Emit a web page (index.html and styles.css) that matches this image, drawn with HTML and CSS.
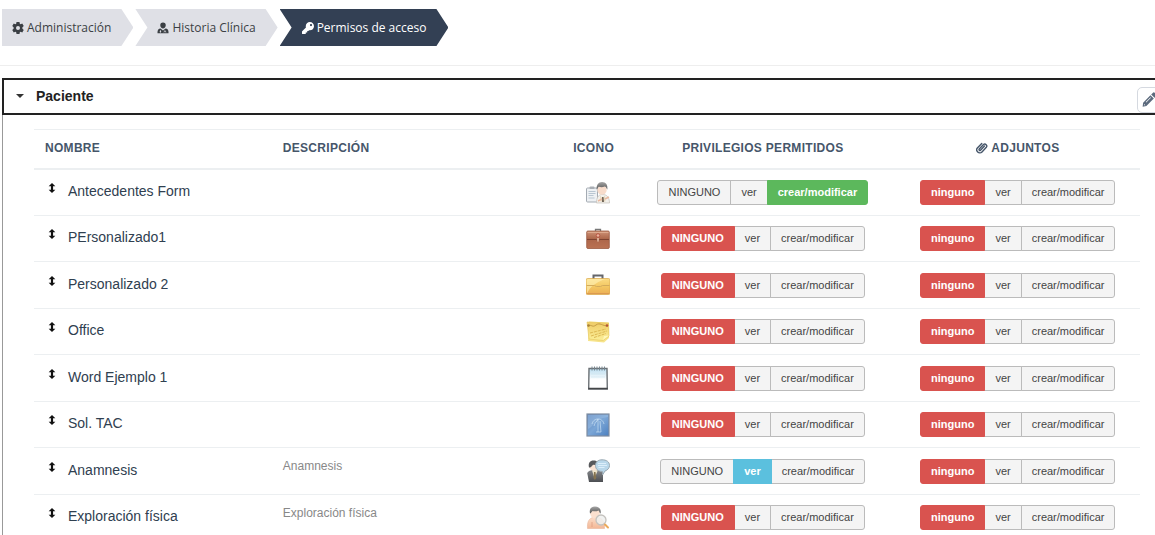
FILE: index.html
```html
<!DOCTYPE html>
<html lang="es">
<head>
<meta charset="utf-8">
<meta name="viewport" content="width=device-width, initial-scale=1">
<title>Permisos de acceso</title>
<link rel="stylesheet" href="styles.css">
</head>
<body>
<svg class="sprite" aria-hidden="true">
  <defs>
    <linearGradient id="g-brown" x1="0" y1="0" x2="0" y2="1"><stop offset="0" stop-color="#cf9377"/><stop offset=".45" stop-color="#ac664a"/><stop offset="1" stop-color="#ba7253"/></linearGradient>
    <linearGradient id="g-gold" x1="0" y1="0" x2="0" y2="1"><stop offset="0" stop-color="#fbdc83"/><stop offset=".5" stop-color="#f3c762"/><stop offset="1" stop-color="#ebae55"/></linearGradient>
    <linearGradient id="g-note" x1="0" y1="0" x2="0" y2="1"><stop offset="0" stop-color="#efcb66"/><stop offset="1" stop-color="#fbef98"/></linearGradient>
    <linearGradient id="g-blue" x1="0" y1="0" x2="1" y2="1"><stop offset="0" stop-color="#5f86bd"/><stop offset=".5" stop-color="#7ba6d6"/><stop offset="1" stop-color="#4b7fbf"/></linearGradient>
    <linearGradient id="g-page" x1="0" y1="0" x2="0" y2="1"><stop offset="0" stop-color="#b9dcef"/><stop offset=".55" stop-color="#fff"/></linearGradient>
    <linearGradient id="g-suit" x1="0" y1="0" x2="0" y2="1"><stop offset="0" stop-color="#85878b"/><stop offset="1" stop-color="#4c4e52"/></linearGradient>
    <linearGradient id="g-skin" x1="0" y1="0" x2="0" y2="1"><stop offset="0" stop-color="#fbdcc8"/><stop offset="1" stop-color="#f3b795"/></linearGradient>
    <linearGradient id="g-hair" x1="0" y1="0" x2="0" y2="1"><stop offset="0" stop-color="#a5a5a5"/><stop offset="1" stop-color="#555"/></linearGradient>
  </defs>
  <symbol id="i-cog" viewBox="0 0 24 24"><path fill-rule="evenodd" d="M9 0h6l.6 3.400 1.600.9L20.500 3l3 5.200-2.700 2.200v3.200l2.700 2.200-3 5.200-3.300-1.300-1.600.9L15 24H9l-.6-3.400-1.600-.9L3.500 21l-3-5.200 2.700-2.200v-3.200L.5 8.200l3-5.200 3.300 1.300 1.600-.9zM12 8a4 4 0 1 0 0 8 4 4 0 0 0 0-8z"/></symbol>
  <symbol id="i-doctor" viewBox="0 0 24 24"><path d="M12 1a5.500 5.500 0 0 1 5.500 5.500C17.500 10 15 13 12 13S6.500 10 6.500 6.500A5.500 5.500 0 0 1 12 1z"/><path fill-rule="evenodd" d="M7 13l5 4 5-4c4 .5 6 3 6 7v2.500H1V20c0-4 2-6.500 6-7zm-.7 3v2.200a1.500 1.500 0 1 0 1.200 0V16zm9 0v2c-1.500.3-2 1.300-2 3h1.200c0-1.300.3-2 1.400-2s1.400.7 1.400 2h1.200c0-1.700-.5-2.700-2-3v-2z"/></symbol>
  <symbol id="i-key" viewBox="0 0 512 512"><path d="M512 176C512 273.200 433.200 352 336 352c-11.200 0-22.200-1-32.800-3l-24 27a24 24 0 0 1-18 8H224v40a24 24 0 0 1-24 24h-40v40a24 24 0 0 1-24 24H24a24 24 0 0 1-24-24v-78a24 24 0 0 1 7-17l161.800-161.800C163.100 213.800 160 195.300 160 176 160 78.800 238.800 0 336 0s176 78.500 176 176zM336 128a48 48 0 1 0 96 0 48 48 0 1 0-96 0z"/></symbol>
  <symbol id="i-clip" viewBox="0 0 24 24"><path d="M17 8l-8 8.300a1.700 1.700 0 0 1-2.500-2.400L15 5.200a3.900 3.900 0 0 1 5.600 5.400L12 19.800a6 6 0 0 1-8.800-8.400L11.500 3" fill="none" stroke="currentColor" stroke-width="2.800" stroke-linecap="round"/></symbol>
  <symbol id="i-pencil" viewBox="0 0 24 24"><path fill-rule="evenodd" d="M17.200 1.400a2.400 2.400 0 0 1 3.400 0l2 2a2.400 2.400 0 0 1 0 3.400l-2.500 2.500-5.400-5.400zM13.500 5.100l5.400 5.400L7 22.400 1 23.500l.8-6.300zM13.500 8.500l-7.500 7.500.8.800 7.500-7.500zM3.500 19l-.3 2.300 2.300-.3z"/></symbol>
  <symbol id="i-move" viewBox="0 0 8 12"><path d="M4 0l4 4H5.300v4H8l-4 4-4-4h2.700V4H0z"/></symbol>

  <symbol id="p-form" viewBox="0 0 24 24">
    <rect x=".5" y="7" width="11" height="14" rx="1" fill="#eef1f4" stroke="#a4abb3"/><rect x="3.500" y="5.500" width="5" height="2.500" rx="1" fill="#a9adb3"/>
    <path d="M2.500 10.500h7M2.500 12.500h7M2.500 14.500h5M2.500 17h6" stroke="#b9c6d2"/>
    <path d="M10.500 22c0-5 1.500-8 5-8.500 4.500-.5 8 2 8 8.500z" fill="#f3f1ec" stroke="#c4beb7" stroke-width=".7"/>
    <path d="M14 14.500l2.500 3 2.500-3 .5 6h-5z" fill="#e6d8bd"/><path d="M16 16h1.500l.5 5h-2z" fill="#72675a"/>
    <circle cx="16" cy="9" r="4.700" fill="#f8dccb"/><path d="M10.700 8.500C10.200 4 12.500 1 16 1c4 0 6 3 5.300 7.500-.8-1-1-2.500-2.500-3-2 .8-4 .8-6 .3-.8.700-1 2-2.100 2.700z" fill="url(#g-hair)"/>
    <path d="M19 18l4-2M12 20l4-2" stroke="#eab9a0" stroke-width="1.500"/>
  </symbol>
  <symbol id="p-brown" viewBox="0 0 24 24">
    <path d="M9.500 5V2.500h5V5" fill="none" stroke="#777" stroke-width="1.300"/>
    <rect x=".7" y="4" width="22.600" height="17.500" rx="1.200" fill="url(#g-brown)" stroke="#9a5a42" stroke-width=".8"/>
    <path d="M1 12.500h9l2 1 2-1h9" fill="none" stroke="#7d4230"/><path d="M1.500 5.500h21" stroke="#dda98d"/>
    <circle cx="12" cy="8.500" r="1.800" fill="#eab39c" stroke="#b85543"/><path d="M12 11v3.500" stroke="#edc5ae" stroke-width="1.500"/>
  </symbol>
  <symbol id="p-gold" viewBox="0 0 24 24">
    <path d="M7.500 6V2.500h9V6" fill="none" stroke="#65666b" stroke-width="2"/>
    <rect x="0" y="5.500" width="24" height="16" rx="1.500" fill="url(#g-gold)" stroke="#d9a64b" stroke-width=".7"/>
    <path d="M1 20.500C4 14 9 10 19 6H2L.7 7z" fill="#fff1b8" opacity=".6"/>
    <path d="M.5 12.500h8l2 1h4l2-1h7" fill="none" stroke="#d3ab5c"/><path d="M1 20.500h22" stroke="#dc9a50"/>
  </symbol>
  <symbol id="p-note" viewBox="0 0 24 24">
    <path d="M3 1.500l20 1v15.500l-5 4.500L2 21z" fill="#f7e48b"/><path d="M1 2l21.500 1 .5 13-6 4.500L3 19z" fill="url(#g-note)" stroke="#e4c660" stroke-width=".6"/>
    <path d="M4 13l16-4M5 16l16-5M8 17.500l12-4" stroke="#dcb852" stroke-dasharray="3 1"/>
    <path d="M2 6c4-2 4 2 8-1s6 1 12 1" fill="none" stroke="#c59c44"/><circle cx="2.500" cy="5.500" r="1.300" fill="#a78036"/><circle cx="21" cy="5.500" r="1.300" fill="#b45535"/><path d="M17 20l1-4 5-.5z" fill="#fff7b9"/>
  </symbol>
  <symbol id="p-pad" viewBox="0 0 24 24">
    <path d="M3 2.500h18l.3 20.500H2.700z" fill="url(#g-page)" stroke="#6b7074" stroke-width="1.400"/>
    <path d="M2.300 22.500h19.400" stroke="#444648" stroke-width="1.500"/>
    <path d="M6 .5v4M8.500.5v4M11 .5v4M13.500.5v4M16 .5v4M18.500.5v4" stroke="#768690" stroke-width="1"/>
    <path d="M5 8h14M5 11h14" stroke="#c9e2ef" stroke-width=".6"/>
  </symbol>
  <symbol id="p-blue" viewBox="0 0 24 24">
    <rect x="1" y="1" width="22" height="22" fill="url(#g-blue)" stroke="#7f8da0" stroke-width="1.200"/>
    <path d="M2 16C7 14 10 5 22 4v-2H2z" fill="#a8c8e8" opacity=".4"/>
    <path d="M6 11c1-4 4-5 6-5s5 1 6 5M12 6c-1 3-3 3-4 7M12 6v13M14 8l1 11M10 19h5" fill="none" stroke="#d6e9f9" stroke-width="1" opacity=".6"/>
  </symbol>
  <symbol id="p-talk" viewBox="0 0 24 24">
    <path d="M3 23L1.200 14c1-2 3.500-3 6.300-3 5 0 9 1 9.500 4.500V23z" fill="url(#g-suit)"/><path d="M6 11.500l2.500 8 3-7.500-2-2z" fill="#eee5cc"/><path d="M8 13h1.500l.8 6-1.400 2-1.500-2z" fill="#857350"/>
    <circle cx="7.500" cy="7.500" r="4" fill="#fae3d4"/><path d="M3 8.500C2 4 4 1.500 7.500 1.500c3.500 0 5 2 4.500 4.500-2 .5-4-.5-5 0-2 1-1 2.500-4 2.500z" fill="#57585b"/>
    <path d="M16 .8c4.500 0 7.500 2 7.500 5.700 0 2.600-1.800 4.600-4.500 5.500L16.500 16v-3.500C12 12.500 9.500 10 9.500 6.500S12 .8 16 .8z" fill="#b9d7ea" stroke="#9aa8b1"/><path d="M12 4.500h8M12 6.500h9M12.500 8.500h6" stroke="#dceefa"/>
  </symbol>
  <symbol id="p-exam" viewBox="0 0 24 24">
    <path d="M1.500 22.500C1 16 3 12 7.500 11.500h4c5 .5 7 4 7 11z" fill="url(#g-skin)" stroke="#e7b59b" stroke-width=".6"/>
    <circle cx="9" cy="7.500" r="4.800" fill="#fbe0cf"/><path d="M4 7.500C3 3 5 .5 9 .5s6.500 2.500 5.500 7c-1-.5-1-2-2-3-2 1-4 1-6 .5-1 .8-1 2-2.500 2.500z" fill="url(#g-hair)"/>
    <circle cx="15" cy="14" r="5" fill="#eef0ef" fill-opacity=".85" stroke="#c4c2be" stroke-width="1.300"/><path d="M19 18.500l3 3" stroke="#eba95a" stroke-width="2" stroke-linecap="round"/><path d="M6 16v5" stroke="#dd9a7b" stroke-width=".7"/>
  </symbol>
</svg>

<nav class="crumbs" aria-label="Ruta">
  <a class="crumb" href="#"><svg class="glyph"><use href="#i-cog"/></svg>Administración</a>
  <a class="crumb" href="#"><svg class="glyph"><use href="#i-doctor"/></svg>Historia Clínica</a>
  <a class="crumb current" href="#" aria-current="page"><svg class="glyph"><use href="#i-key"/></svg>Permisos de acceso</a>
</nav>

<main class="panel">
  <header class="panel-head">
    <button class="toggle" type="button" aria-expanded="true"><span class="caret"></span>Paciente</button>
    <button class="edit" type="button" aria-label="Editar"><svg class="pencil"><use href="#i-pencil"/></svg></button>
  </header>
  <div class="panel-body">
    <table class="perms">
      <colgroup><col class="c-name"><col class="c-desc"><col class="c-icon"><col class="c-priv"><col class="c-att"></colgroup>
      <thead>
        <tr><th>NOMBRE</th><th>DESCRIPCIÓN</th><th class="mid">ICONO</th><th class="mid">PRIVILEGIOS PERMITIDOS</th><th class="mid"><svg class="clip"><use href="#i-clip"/></svg> ADJUNTOS</th></tr>
      </thead>
      <tbody>
        <tr>
          <td><div class="name"><svg class="move"><use href="#i-move"/></svg>Antecedentes Form</div></td><td class="desc"></td>
          <td class="mid"><svg class="pic"><use href="#p-form"/></svg></td>
          <td><div class="group"><button type="button">NINGUNO</button><button type="button">ver</button><button type="button" class="on full">crear/modificar</button></div></td>
          <td><div class="group"><button type="button" class="on none">ninguno</button><button type="button">ver</button><button type="button">crear/modificar</button></div></td>
        </tr>
        <tr>
          <td><div class="name"><svg class="move"><use href="#i-move"/></svg>PErsonalizado1</div></td><td class="desc"></td>
          <td class="mid"><svg class="pic"><use href="#p-brown"/></svg></td>
          <td><div class="group"><button type="button" class="on none">NINGUNO</button><button type="button">ver</button><button type="button">crear/modificar</button></div></td>
          <td><div class="group"><button type="button" class="on none">ninguno</button><button type="button">ver</button><button type="button">crear/modificar</button></div></td>
        </tr>
        <tr>
          <td><div class="name"><svg class="move"><use href="#i-move"/></svg>Personalizado 2</div></td><td class="desc"></td>
          <td class="mid"><svg class="pic"><use href="#p-gold"/></svg></td>
          <td><div class="group"><button type="button" class="on none">NINGUNO</button><button type="button">ver</button><button type="button">crear/modificar</button></div></td>
          <td><div class="group"><button type="button" class="on none">ninguno</button><button type="button">ver</button><button type="button">crear/modificar</button></div></td>
        </tr>
        <tr>
          <td><div class="name"><svg class="move"><use href="#i-move"/></svg>Office</div></td><td class="desc"></td>
          <td class="mid"><svg class="pic"><use href="#p-note"/></svg></td>
          <td><div class="group"><button type="button" class="on none">NINGUNO</button><button type="button">ver</button><button type="button">crear/modificar</button></div></td>
          <td><div class="group"><button type="button" class="on none">ninguno</button><button type="button">ver</button><button type="button">crear/modificar</button></div></td>
        </tr>
        <tr>
          <td><div class="name"><svg class="move"><use href="#i-move"/></svg>Word Ejemplo 1</div></td><td class="desc"></td>
          <td class="mid"><svg class="pic"><use href="#p-pad"/></svg></td>
          <td><div class="group"><button type="button" class="on none">NINGUNO</button><button type="button">ver</button><button type="button">crear/modificar</button></div></td>
          <td><div class="group"><button type="button" class="on none">ninguno</button><button type="button">ver</button><button type="button">crear/modificar</button></div></td>
        </tr>
        <tr>
          <td><div class="name"><svg class="move"><use href="#i-move"/></svg>Sol. TAC</div></td><td class="desc"></td>
          <td class="mid"><svg class="pic"><use href="#p-blue"/></svg></td>
          <td><div class="group"><button type="button" class="on none">NINGUNO</button><button type="button">ver</button><button type="button">crear/modificar</button></div></td>
          <td><div class="group"><button type="button" class="on none">ninguno</button><button type="button">ver</button><button type="button">crear/modificar</button></div></td>
        </tr>
        <tr>
          <td><div class="name"><svg class="move"><use href="#i-move"/></svg>Anamnesis</div></td><td class="desc">Anamnesis</td>
          <td class="mid"><svg class="pic"><use href="#p-talk"/></svg></td>
          <td><div class="group"><button type="button">NINGUNO</button><button type="button" class="on view">ver</button><button type="button">crear/modificar</button></div></td>
          <td><div class="group"><button type="button" class="on none">ninguno</button><button type="button">ver</button><button type="button">crear/modificar</button></div></td>
        </tr>
        <tr>
          <td><div class="name"><svg class="move"><use href="#i-move"/></svg>Exploración física</div></td><td class="desc">Exploración física</td>
          <td class="mid"><svg class="pic"><use href="#p-exam"/></svg></td>
          <td><div class="group"><button type="button" class="on none">NINGUNO</button><button type="button">ver</button><button type="button">crear/modificar</button></div></td>
          <td><div class="group"><button type="button" class="on none">ninguno</button><button type="button">ver</button><button type="button">crear/modificar</button></div></td>
        </tr>
      </tbody>
    </table>
  </div>
</main>
</body>
</html>
```

FILE: styles.css
```css
* { box-sizing: border-box; }

html { overflow: hidden; }

body {
  margin: 0;
  background: #fff;
  color: #2f4050;
  font-family: "Liberation Sans", Arial, sans-serif;
  font-size: 14px;
}

.sprite {
  position: absolute;
  width: 0;
  height: 0;
}

button {
  font-family: inherit;
  margin: 0;
  cursor: pointer;
}

/* Breadcrumb arrows */
.crumbs {
  display: flex;
  gap: 2px;
  padding: 9px 2px 19px;
  border-bottom: 1px solid #eee;
}

.crumb {
  display: flex;
  align-items: center;
  gap: 3px;
  height: 37px;
  padding: 0 22px;
  background: #dfe0e6;
  color: #3b3f44;
  font-family: "Open Sans", sans-serif;
  font-size: 12px;
  text-decoration: none;
  white-space: nowrap;
  clip-path: polygon(0 0, calc(100% - 12px) 0, 100% 50%, calc(100% - 12px) 100%, 0 100%, 12px 50%);
}

.crumb:first-child {
  padding-left: 10px;
  clip-path: polygon(0 0, calc(100% - 12px) 0, 100% 50%, calc(100% - 12px) 100%, 0 100%);
}

.crumb.current {
  background: #334054;
  color: #fff;
  font-weight: 500;
}

.glyph {
  width: 12px;
  height: 12px;
  fill: currentColor;
}

/* Collapsible panel */
.panel {
  margin: 12px -16px 0 2px;
}

.panel-head {
  display: flex;
  align-items: center;
  justify-content: space-between;
  height: 37px;
  padding-right: 4px;
  border: 2px solid #222;
}

.toggle {
  display: flex;
  align-items: center;
  gap: 12px;
  padding: 0 0 1px 12px;
  border: 0;
  background: none;
  color: #222;
  font-size: 14px;
  font-weight: bold;
}

.caret {
  border: 4px solid transparent;
  border-top-color: #333;
  border-bottom: 0;
}

.edit {
  display: flex;
  align-items: center;
  align-self: flex-end;
  width: 28px;
  height: 26px;
  padding: 0 4px 2px;
  border: 1px solid #d5d9e0;
  border-radius: 5px;
  background: #fff;
  color: #5b6a7d;
}

.pencil {
  flex: none;
  width: 15px;
  height: 15px;
  fill: currentColor;
}

.panel-body {
  padding: 14px 31px 0;
  border-left: 1px solid #999;
}

/* Permissions table */
.perms {
  width: 100%;
  table-layout: fixed;
  border-collapse: separate;
  border-spacing: 0;
  border-top: 1px solid #eceff1;
}

.c-name { width: 21.5%; }
.c-desc { width: 25.8%; }
.c-icon { width: 6.6%; }
.c-priv { width: 24%; }
.c-att { width: 22.1%; }

.perms th {
  height: 40px;
  padding: 0 11px 2px;
  border-bottom: 2px solid #eceff1;
  color: #46566a;
  font-size: 12px;
  letter-spacing: 0.025em;
  text-align: left;
  white-space: nowrap;
}

.perms td {
  height: 46px;
  padding: 0 11px;
  border-bottom: 1px solid #eceff1;
  vertical-align: middle;
}

.perms tr:nth-child(2n+3) td { height: 47px; }

.perms .mid {
  padding: 0 0 2px;
  text-align: center;
}

.clip {
  width: 12px;
  height: 12px;
  vertical-align: -2px;
}

.name {
  display: flex;
  align-items: flex-start;
  gap: 12px;
  padding: 0 0 3px 3px;
  white-space: nowrap;
}

.move {
  width: 8px;
  height: 10px;
  fill: #111;
}

.perms .desc {
  padding-bottom: 10px;
  color: #888;
  font-size: 12px;
}

.pic {
  display: block;
  width: 24px;
  height: 24px;
  margin: 2px 0 0 29px;
}

.group {
  display: flex;
  justify-content: center;
}

.group button {
  height: 25px;
  padding: 0 10px 1px;
  border: 1px solid #bbb;
  background: #f4f4f4;
  color: #444;
  font-size: 11px;
}

.group button + button { margin-left: -1px; }
.group button:first-child { border-radius: 3px 0 0 3px; }
.group button:last-child { border-radius: 0 3px 3px 0; }

.group .on {
  z-index: 1;
  color: #fff;
  font-weight: bold;
}

.group .none { background: #d9534f; border-color: #d9534f; }
.group .view { background: #5bc0de; border-color: #5bc0de; }
.group .full { background: #5cb85c; border-color: #5cb85c; }
```
